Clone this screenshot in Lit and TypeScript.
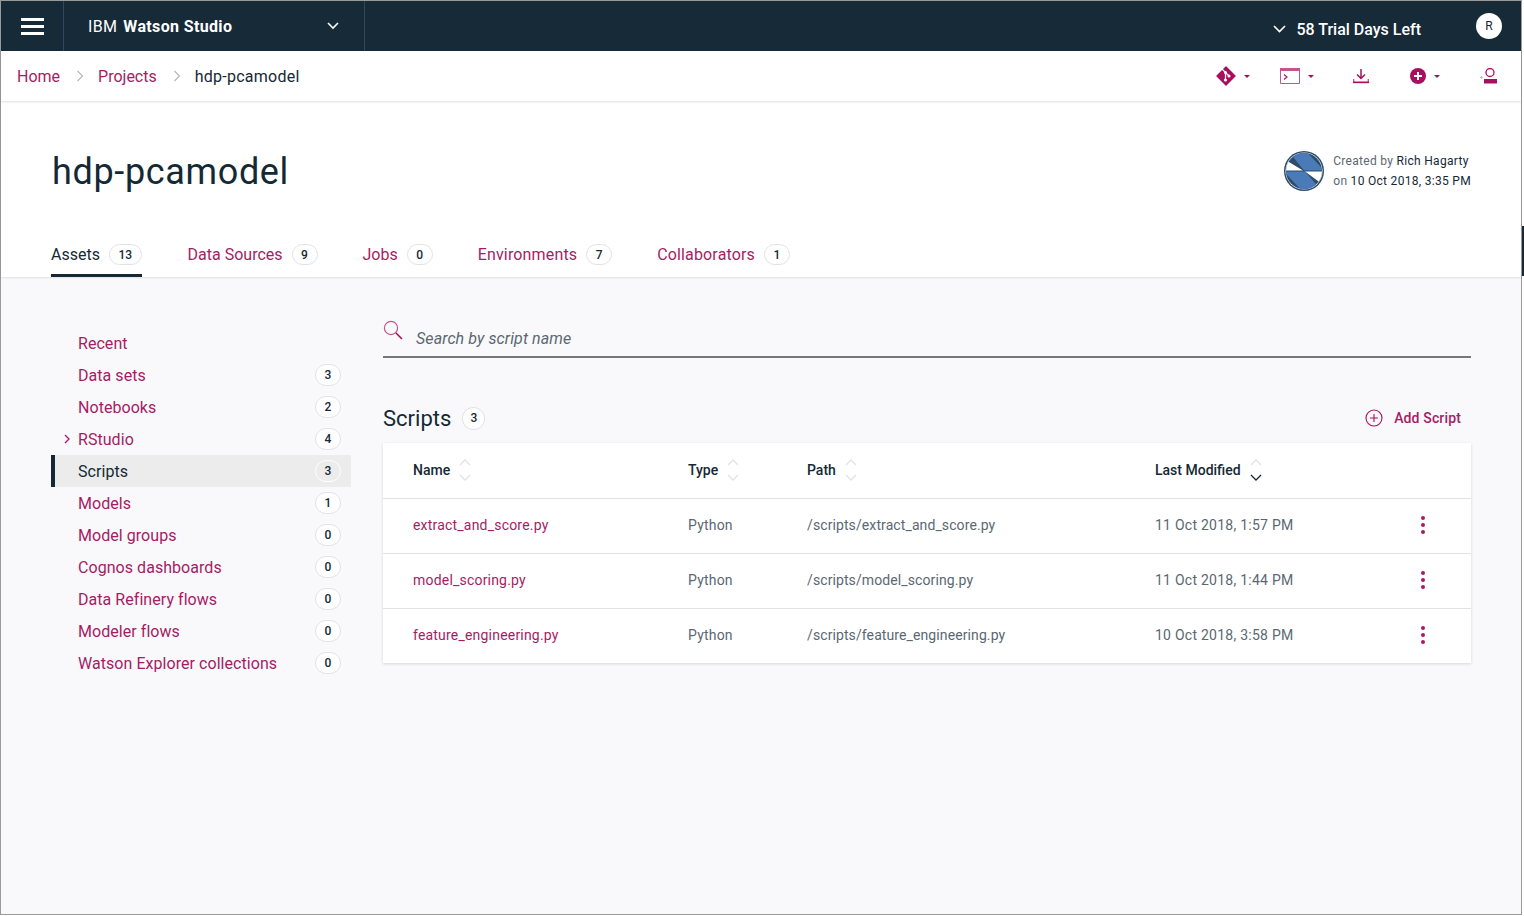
import { LitElement, html, css, svg } from "lit";
import { customElement } from "lit/decorators.js";

const chevron = html`<svg class="crumbsep" width="8" height="12" viewBox="0 0 8 12"><path d="M1.5 1l5 5-5 5" fill="none" stroke="#b4b8bc" stroke-width="1.2"/></svg>`;
const sortIcon = (active = false) => html`<svg class="sort" width="12" height="22" viewBox="0 0 12 22">
  <path d="M1 6l5-5 5 5" fill="none" stroke="#dfe3e6" stroke-width="1.3"/>
  <path d="M1 16l5 5 5-5" fill="none" stroke="${active ? "#152935" : "#dfe3e6"}" stroke-width="1.3"/>
</svg>`;
const caret = html`<svg class="caret" width="6" height="3" viewBox="0 0 6 3"><path d="M0 0h6L3 3z" fill="#a8105f"/></svg>`;

const tabs = [
  ["Assets", "13"], ["Data Sources", "9"], ["Jobs", "0"], ["Environments", "7"], ["Collaborators", "1"],
];
const side = [
  ["Recent", ""], ["Data sets", "3"], ["Notebooks", "2"], ["RStudio", "4"], ["Scripts", "3"], ["Models", "1"],
  ["Model groups", "0"], ["Cognos dashboards", "0"], ["Data Refinery flows", "0"], ["Modeler flows", "0"], ["Watson Explorer collections", "0"],
];
const rows = [
  ["extract_and_score.py", "Python", "/scripts/extract_and_score.py", "11 Oct 2018, 1:57 PM"],
  ["model_scoring.py", "Python", "/scripts/model_scoring.py", "11 Oct 2018, 1:44 PM"],
  ["feature_engineering.py", "Python", "/scripts/feature_engineering.py", "10 Oct 2018, 3:58 PM"],
];

@customElement("app-root")
export class AppRoot extends LitElement {
  static styles = css`
    :host { display: block; width: 1524px; height: 916px; overflow: hidden; background: #fff; font-family: "Roboto", "Noto Sans", sans-serif; color: #152935; position: relative; }
    * { box-sizing: border-box; }
    .window { width: 1522px; height: 915px; border: 1px solid #9a9a9a; display: flex; flex-direction: column; background: #f9f9fb; }
    .sliver { position: absolute; left: 1522px; top: 226px; width: 2px; height: 50px; background: #172a38; }
    .top { height: 50px; background: #172a38; display: flex; align-items: stretch; color: #fff; flex: none; }
    .burger { width: 63px; border-right: 1px solid #2f4a5e; display: flex; flex-direction: column; gap: 3.6px; padding: 17px 0 0 20px; }
    .burger i { display: block; width: 23px; height: 3.4px; background: #fff; }
    .product { width: 301px; border-right: 1px solid #2f4a5e; display: flex; align-items: center; padding: 0 24px; font-size: 16px; font-weight: 700; letter-spacing: 0.35px; }
    .product span { font-weight: 400; margin-right: 6px; }
    .product svg { margin-left: auto; margin-right: 1px; }
    .trial { margin-left: auto; display: flex; align-items: center; gap: 10px; font-size: 16px; font-weight: 500; padding-top: 6px; }
    .avatar { width: 26px; height: 26px; border-radius: 50%; background: #fff; color: #152935; display: flex; align-items: center; justify-content: center; font-size: 12px; margin: 12px 19px 0 55px; }
    .crumbs { height: 50px; flex: none; background: #fff; display: flex; align-items: center; padding: 0 24px 0 16px; font-size: 16px; box-shadow: 0 1px 2px rgba(0,0,0,.12); position: relative; z-index: 2; }
    .crumbs a { color: #a61c64; }
    .crumbs span { letter-spacing: .25px; }
    .crumbsep { margin: 0 14px 0 16px; }
    .tools { margin-left: auto; display: flex; align-items: center; }
    .tool { display: flex; align-items: center; gap: 8px; }
    .caret { flex: none; }
    .head { background: #fff; flex: none; height: 176px; padding: 0 50px; display: flex; flex-direction: column; box-shadow: 0 1px 2px rgba(0,0,0,.1); position: relative; z-index: 1; }
    .titlerow { display: flex; align-items: flex-start; height: 123px; }
    h1 { font-size: 36px; font-weight: 400; margin: 49px 0 0 1px; line-height: 44px; letter-spacing: 0.65px; }
    .meta { margin-left: auto; display: flex; gap: 9px; margin-top: 50px; font-size: 12px; line-height: 20px; letter-spacing: .3px; }
    .meta .g { color: #5a6872; }
    .tabs { display: flex; gap: 45px; height: 53px; }
    .tab { display: flex; align-items: flex-start; gap: 9px; height: 53px; padding-top: 20px; font-size: 16px; color: #a61c64; line-height: 22px; border-bottom: 3px solid transparent; }
    .tab:nth-child(n+4) { letter-spacing: .15px; }
    .tab.on { color: #152935; border-bottom-color: #152935; margin-right: 1px; }
    .tab.on .badge { padding: 0 8.5px; }
    .badge { display: inline-flex; align-items: center; justify-content: center; height: 21px; min-width: 26px; padding: 0 8px; border: 1px solid #dfe3e6; border-radius: 11px; font-size: 12px; font-weight: 500; color: #152935; background: #fff; }
    .body { flex: 1; display: flex; padding: 50px 50px 0; }
    .side { width: 300px; flex: none; margin-right: 32px; display: flex; flex-direction: column; }
    .item { height: 32px; display: flex; align-items: center; padding: 0 10px 0 27px; font-size: 16px; letter-spacing: .05px; color: #a61c64; position: relative; }
    .item.on { background: #ececec; color: #152935; border-left: 4px solid #152935; padding-left: 23px; }
    .item .badge { margin-left: auto; height: 22px; }
    .item.on .badge { background: transparent; border-color: #fff; }
    .expander { position: absolute; left: 13px; top: 11px; }
    .main { flex: 1; display: flex; flex-direction: column; }
    .search { height: 38px; border-bottom: 2px solid #777; display: flex; align-items: flex-start; margin-top: -7px; gap: 13px; font-style: italic; font-size: 16px; letter-spacing: .1px; color: #5a6872; }
    .search span { margin-top: 9px; }
    .sechead { display: flex; align-items: center; height: 36px; margin-top: 42px; }
    h2 { font-size: 22px; font-weight: 400; margin: 0 11px 0 0; }
    .sechead .badge { min-width: 23px; width: 23px; height: 23px; padding: 0; }
    .add { margin-left: auto; margin-right: 10px; display: flex; align-items: center; gap: 11px; color: #a61c64; font-size: 14px; font-weight: 500; letter-spacing: .15px; }
    .table { background: #fff; margin-top: 7px; box-shadow: 0 1px 3px rgba(0,0,0,.14); }
    .row { display: grid; grid-template-columns: 275px 119px 348px 1fr 50px; padding-left: 30px; height: 55px; align-items: center; font-size: 14px; letter-spacing: .2px; color: #5a6872; border-top: 1px solid #dfe3e6; padding-bottom: 2px; }
    .row.hd { height: 55px; border-top: 0; color: #152935; font-weight: 500; letter-spacing: 0; padding-bottom: 1px; }
    .row.hd > div { display: flex; align-items: center; gap: 9px; }
    .row a { color: #a61c64; }
    .path { letter-spacing: .1px; }
    .date { letter-spacing: .25px; }
    .dots { display: flex; flex-direction: column; gap: 3px; align-items: center; width: 4px; }
    .dots i { width: 4px; height: 4px; border-radius: 50%; background: #a61c64; display: block; }
  `;

  render() {
    return html`<div class="sliver"></div><div class="window">
      <div class="top">
        <div class="burger"><i></i><i></i><i></i></div>
        <div class="product"><span>IBM</span> Watson Studio
          <svg width="12" height="8" viewBox="0 0 12 8"><path d="M1 1l5 5 5-5" fill="none" stroke="#fff" stroke-width="1.6"/></svg>
        </div>
        <div class="trial">
          <svg width="13" height="8" viewBox="0 0 13 8"><path d="M1 1l5.5 5.5L12 1" fill="none" stroke="#fff" stroke-width="1.6"/></svg>
          58 Trial Days Left
        </div>
        <div class="avatar">R</div>
      </div>
      <div class="crumbs">
        <a>Home</a>${chevron}<a>Projects</a>${chevron}<span>hdp-pcamodel</span>
        <div class="tools">
          <div class="tool" style="margin-right:30px">
            <svg width="20" height="20" viewBox="0 0 20 20"><path d="M10 1l9 9-9 9-9-9z" fill="#a8105f" stroke="#a8105f" stroke-width="1.4" stroke-linejoin="round"/><path d="M6 3l7 7M9.5 6.5v7.5" stroke="#fff" stroke-width="1.2" fill="none"/><circle cx="9.5" cy="14" r="1.6" fill="#fff"/><circle cx="9.5" cy="6.5" r="1.5" fill="#fff"/><circle cx="13" cy="10" r="1.5" fill="#fff"/></svg>
            ${caret}
          </div>
          <div class="tool" style="margin-right:39px">
            <svg width="20" height="16" viewBox="0 0 20 16"><path d="M.5.5h19v15H.5z" fill="none" stroke="#c4568f"/><path d="M0 0h20v3H0z" fill="#c4568f"/><path d="M4 6.5l3 2.5-3 2.5" fill="none" stroke="#a8105f" stroke-width="1.1"/></svg>
            ${caret}
          </div>
          <div class="tool" style="margin-right:41px">
            <svg width="16" height="16" viewBox="0 0 16 16"><path d="M8 1v9M4 6.5l4 4 4-4" fill="none" stroke="#a8105f" stroke-width="1.5"/><path d="M.7 11v3.6h14.6V11" fill="none" stroke="#c4568f" stroke-width="1.3"/><path d="M0 13.5h16V15H0z" fill="#a8105f"/></svg>
          </div>
          <div class="tool" style="margin-right:40px">
            <svg width="16" height="16" viewBox="0 0 16 16"><circle cx="8" cy="8" r="8" fill="#a8105f"/><path d="M8 4v8M4 8h8" stroke="#fff" stroke-width="2"/></svg>
            ${caret}
          </div>
          <svg width="17" height="16" viewBox="0 0 17 16"><circle cx="10" cy="4.5" r="4" fill="none" stroke="#a8105f" stroke-width="1.3"/><path d="M4 11h13v4.5H4z" fill="#a8105f"/><path d="M0 9.5h3M1.5 8v3" stroke="#b9b9b9" stroke-width=".8"/></svg>
        </div>
      </div>
      <div class="head">
        <div class="titlerow">
          <h1>hdp-pcamodel</h1>
          <div class="meta">
            <svg width="40" height="40" viewBox="0 0 40 40">
              <defs><clipPath id="c"><circle cx="20" cy="20" r="18"/></clipPath></defs>
              ${svg`<circle cx="20" cy="20" r="20" fill="#2a4a66"/><circle cx="20" cy="20" r="18.6" fill="#e8eef4"/>
              <g clip-path="url(#c)">
                <path d="M0 0h40v40H0z" fill="#2c4d69"/>
                <path d="M6 2L22 0 40 19.5H20z" fill="#4a7ab8"/>
                <path d="M0 8L19 19.5H0z" fill="#fff"/>
                <path d="M0 20.5h21L38 40H18z" fill="#4a7ab8"/>
                <path d="M21 20.5h19v14z" fill="#fff"/>
              </g>`}
            </svg>
            <div>
              <div><span class="g">Created by</span> Rich Hagarty</div>
              <div><span class="g">on</span> 10 Oct 2018, 3:35 PM</div>
            </div>
          </div>
        </div>
        <div class="tabs">
          ${tabs.map(([t, n], i) => html`<div class="tab ${i === 0 ? "on" : ""}">${t}<span class="badge">${n}</span></div>`)}
        </div>
      </div>
      <div class="body">
        <div class="side">
          ${side.map(([t, n]) => html`<div class="item ${t === "Scripts" ? "on" : ""}">
            ${t === "RStudio" ? html`<svg class="expander" width="6" height="10" viewBox="0 0 6 10"><path d="M1 1l4 4-4 4" fill="none" stroke="#a61c64" stroke-width="1.3"/></svg>` : ""}
            ${t}${n ? html`<span class="badge">${n}</span>` : ""}
          </div>`)}
        </div>
        <div class="main">
          <div class="search">
            <svg width="20" height="20" viewBox="0 0 20 20"><circle cx="8" cy="8" r="6.6" fill="none" stroke="#c4568f" stroke-width="1.2"/><path d="M13 13l6 6" stroke="#a8105f" stroke-width="1.6"/></svg>
            <span>Search by script name</span>
          </div>
          <div class="sechead">
            <h2>Scripts</h2><span class="badge">3</span>
            <div class="add">
              <svg width="18" height="18" viewBox="0 0 18 18"><circle cx="9" cy="9" r="8" fill="none" stroke="#a8105f" stroke-width="1.1"/><path d="M9 5v8M5 9h8" stroke="#a8105f" stroke-width="1.1"/></svg>
              Add Script
            </div>
          </div>
          <div class="table">
            <div class="row hd">
              <div>Name ${sortIcon()}</div><div>Type ${sortIcon()}</div><div>Path ${sortIcon()}</div><div>Last Modified ${sortIcon(true)}</div><div></div>
            </div>
            ${rows.map((r) => html`<div class="row">
              <div><a>${r[0]}</a></div><div>${r[1]}</div><div class="path">${r[2]}</div><div class="date">${r[3]}</div>
              <div class="dots"><i></i><i></i><i></i></div>
            </div>`)}
          </div>
        </div>
      </div>
    </div>`;
  }
}
